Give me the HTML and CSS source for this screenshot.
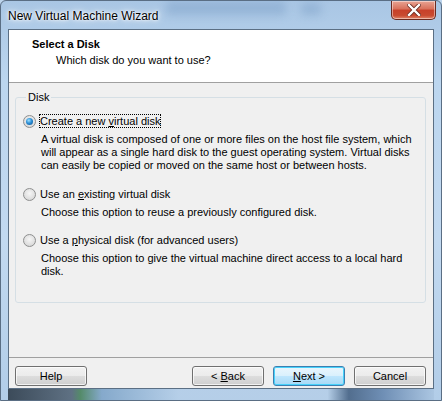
FILE: index.html
```html
<!DOCTYPE html>
<html>
<head>
<meta charset="utf-8">
<link rel="stylesheet" href="styles.css">
</head>
<body>
<div class="window">
  <div class="glass-blob b1"></div>
  <div class="glass-blob b2"></div>
  <div class="titlebar">
    <span class="title">New Virtual Machine Wizard</span>
    <span class="close"><svg width="14" height="12" viewBox="0 0 14 12"><path d="M2 1 L12 11 M12 1 L2 11" stroke="#6a2a20" stroke-width="4" stroke-linecap="square"/><path d="M2 1 L12 11 M12 1 L2 11" stroke="#fff" stroke-width="2.4" stroke-linecap="square"/></svg></span>
  </div>
  <div class="client">
    <div class="header">
      <div class="h-title">Select a Disk</div>
      <div class="h-sub">Which disk do you want to use?</div>
    </div>
    <div class="body">
      <fieldset class="group">
        <legend>Disk</legend>
        <div class="option">
          <div class="opt-row"><span class="radio checked"></span><span class="label focus">Create a new <u>v</u>irtual disk</span></div>
          <p class="desc">A virtual disk is composed of one or more files on the host file system, which will appear as a single hard disk to the guest operating system. Virtual disks can easily be copied or moved on the same host or between hosts.</p>
        </div>
        <div class="option">
          <div class="opt-row"><span class="radio"></span><span class="label">Use an <u>e</u>xisting virtual disk</span></div>
          <p class="desc">Choose this option to reuse a previously configured disk.</p>
        </div>
        <div class="option">
          <div class="opt-row"><span class="radio"></span><span class="label">Use a <u>p</u>hysical disk (for advanced users)</span></div>
          <p class="desc">Choose this option to give the virtual machine direct access to a local hard disk.</p>
        </div>
      </fieldset>
    </div>
    <div class="footer">
      <button class="btn">Help</button>
      <div class="spacer"></div>
      <button class="btn">&lt; <u>B</u>ack</button>
      <button class="btn default"><u>N</u>ext &gt;</button>
      <button class="btn">Cancel</button>
    </div>
  </div>
  <div class="bottom-frame"></div>
</div>
</body>
</html>
```
FILE: styles.css
```css
html, body {
  margin: 0;
  padding: 0;
  background: #bcd4ec;
}
body {
  font-family: "Liberation Sans", Arial, sans-serif;
  font-size: 11px;
  color: #000;
}
.window {
  position: relative;
  width: 442px;
  height: 401px;
  overflow: hidden;
  box-sizing: border-box;
  border-radius: 6px 6px 0 0;
  border: 1px solid #5a6e84;
  background: linear-gradient(180deg, #a9c6e4 0%, #bcd6ef 20%, #c2d9f0 60%, #b2cde8 100%);
  display: flex;
  flex-direction: column;
}
.glass-blob {
  position: absolute;
  background: #6d92bd;
  opacity: 0.35;
  filter: blur(4px);
  border-radius: 4px;
}
.b1 { left: 165px; top: 0; width: 120px; height: 14px; }
.b2 { left: 300px; top: 2px; width: 20px; height: 12px; }
.titlebar {
  position: relative;
  height: 28px;
  display: flex;
  align-items: center;
  justify-content: space-between;
  padding: 0 5px 0 7px;
}
.title {
  font-size: 12px;
  color: #000;
  text-shadow: 0 0 8px #fff, 0 0 4px #fff, 0 0 2px #fff;
  margin-top: 2px;
}
.close {
  align-self: flex-start;
  width: 45px;
  height: 19px;
  box-sizing: border-box;
  border: 1px solid #6b2a20;
  border-top: none;
  border-radius: 0 0 5px 5px;
  background: linear-gradient(180deg, #e8a494 0%, #d8705a 45%, #c7402a 50%, #c94a30 80%, #e0846a 100%);
  box-shadow: inset 0 0 0 1px rgba(255,255,255,0.45);
  display: flex;
  align-items: center;
  justify-content: center;
}
.client {
  margin: 0 7px;
  height: 360px;
  background: #f0f0f0;
  border: 1px solid #5b6f84;
  box-sizing: border-box;
  display: flex;
  flex-direction: column;
}
.header {
  height: 53px;
  background: #fff;
  border-bottom: 1px solid #a0a0a0;
  box-sizing: border-box;
  padding: 7px 0 0 23px;
}
.h-title {
  font-weight: bold;
  line-height: 15px;
}
.h-sub {
  padding-left: 24px;
  line-height: 15px;
  margin-top: 1px;
}
.body {
  padding: 8px 7px 0 6px;
  flex: 1;
}
.group {
  margin: 0;
  padding: 9px 8px 0 7px;
  height: 212px;
  box-sizing: border-box;
  border: 1px solid #d5dfe5;
  border-radius: 3px;
}
.group legend {
  padding: 0 2px;
  margin-left: 3px;
  line-height: 13px;
}
.option {
  margin-bottom: 14px;
}
.option:nth-child(3) {
  margin-bottom: 13px;
}
.opt-row {
  display: flex;
  align-items: center;
  height: 16px;
}
.radio {
  width: 11px;
  height: 11px;
  border-radius: 50%;
  border: 1px solid #8e8f8f;
  background: radial-gradient(circle at 50% 40%, #f6f6f6 0%, #dcdcdc 70%, #c9c9c9 100%);
  box-sizing: content-box;
  margin-right: 3px;
  position: relative;
  flex: none;
}
.radio.checked::after {
  content: "";
  position: absolute;
  left: 2px;
  top: 2px;
  width: 7px;
  height: 7px;
  border-radius: 50%;
  background: radial-gradient(circle at 40% 35%, #9fe2ff 0%, #2d8fd6 45%, #0a4e8e 100%);
}
.label {
  line-height: 14px;
  padding: 0 1px;
}
.label.focus {
  outline: 1px dotted #000;
  outline-offset: -1px;
}
.desc {
  margin: 4px 0 0 18px;
  line-height: 13px;
}
.footer {
  height: 31px;
  border-top: 1px solid #a0a0a0;
  box-sizing: border-box;
  display: flex;
  align-items: flex-start;
  padding: 8px 7px 0 6px;
  gap: 9px;
}
.spacer {
  flex: 1;
}
.btn {
  width: 72px;
  height: 20px;
  font-family: inherit;
  font-size: 11px;
  padding: 0;
  border: 1px solid #707070;
  border-radius: 3px;
  background: linear-gradient(180deg, #f2f2f2 0%, #ebebeb 50%, #dddddd 51%, #cfcfcf 100%);
  box-shadow: inset 0 0 0 1px rgba(255,255,255,0.7);
  color: #000;
}
.btn.default {
  border-color: #3c7fb1;
  background: linear-gradient(180deg, #eaf6fd 0%, #d9f0fc 50%, #bee6fd 51%, #a7d9f5 100%);
  box-shadow: inset 0 0 0 1px #48d2fb;
}
.bottom-frame {
  flex: 1;
  margin: 0 7px;
  background: linear-gradient(90deg, #1e2a36 0%, #4a5a6a 15%, #3d7a4a 17%, #7aa0c4 22%, #b6cfe8 40%, #b6cfe8 75%, #3a5678 80%, #5e7fa8 88%, #a9c4e0 100%);
  opacity: 0.8;
}
```
